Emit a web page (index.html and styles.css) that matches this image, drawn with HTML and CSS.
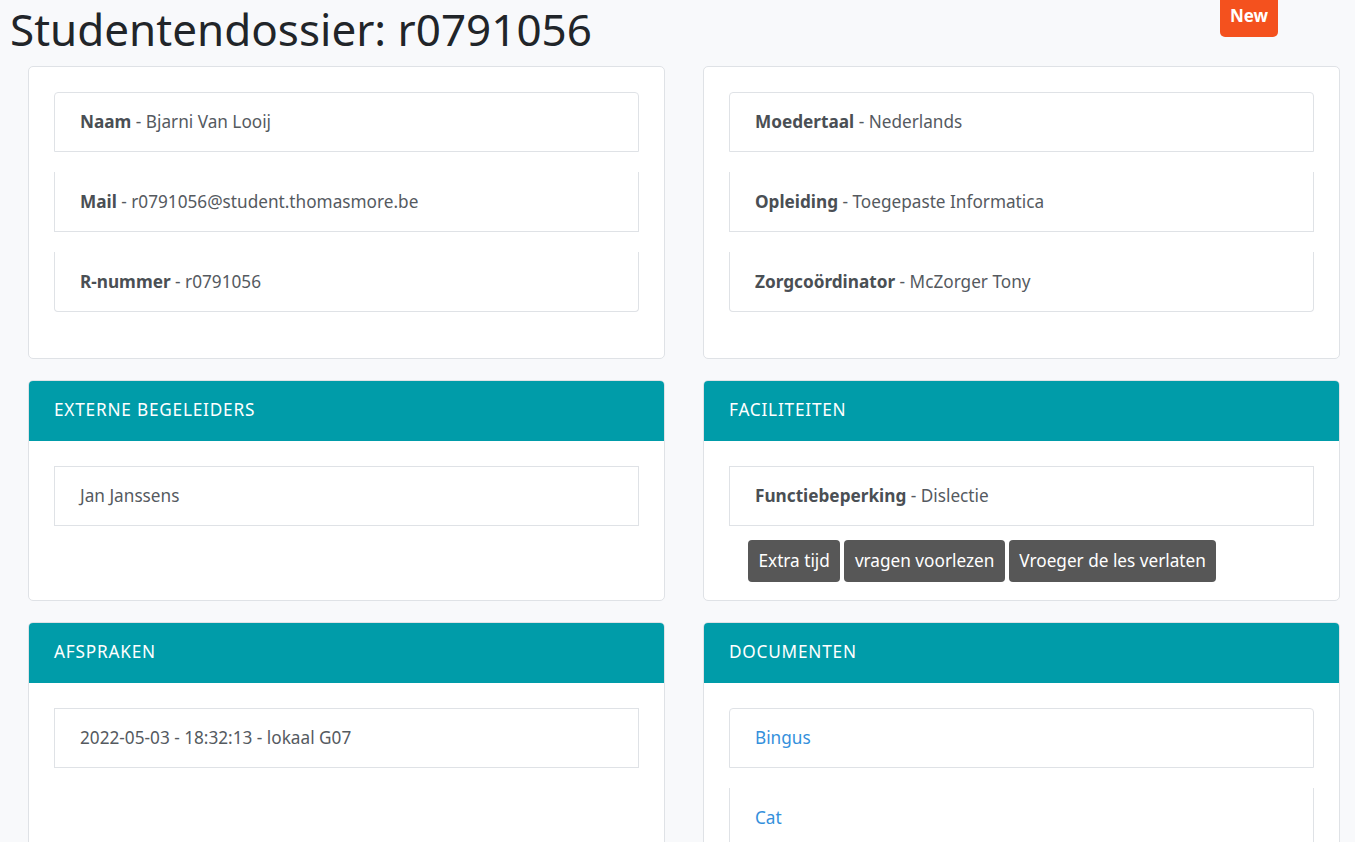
FILE: index.html
```html
<!DOCTYPE html>
<html lang="nl">
<head>
<meta charset="utf-8">
<title>Studentendossier</title>
<link rel="stylesheet" href="styles.css">
</head>
<body>
<span class="new-badge">New</span>
<h1 class="page-title">Studentendossier: r0791056</h1>
<main class="grid">
  <section class="card">
    <div class="card-body">
      <ul class="list">
        <li class="item"><b>Naam</b> - Bjarni Van Looij</li>
        <li class="item"><b>Mail</b> - r0791056@student.thomasmore.be</li>
        <li class="item"><b>R-nummer</b> - r0791056</li>
      </ul>
    </div>
  </section>
  <section class="card">
    <div class="card-body">
      <ul class="list">
        <li class="item"><b>Moedertaal</b> - Nederlands</li>
        <li class="item"><b>Opleiding</b> - Toegepaste Informatica</li>
        <li class="item"><b>Zorgcoördinator</b> - McZorger Tony</li>
      </ul>
    </div>
  </section>
  <section class="card">
    <div class="card-header">EXTERNE BEGELEIDERS</div>
    <div class="card-body">
      <ul class="list">
        <li class="item">Jan Janssens</li>
      </ul>
    </div>
  </section>
  <section class="card">
    <div class="card-header">FACILITEITEN</div>
    <div class="card-body">
      <ul class="list list-tight">
        <li class="item"><b>Functiebeperking</b> - Dislectie</li>
      </ul>
      <div class="tags">
        <span class="tag">Extra tijd</span>
        <span class="tag">vragen voorlezen</span>
        <span class="tag">Vroeger de les verlaten</span>
      </div>
    </div>
  </section>
  <section class="card">
    <div class="card-header">AFSPRAKEN</div>
    <div class="card-body">
      <ul class="list">
        <li class="item">2022-05-03 - 18:32:13 - lokaal G07</li>
      </ul>
    </div>
  </section>
  <section class="card">
    <div class="card-header">DOCUMENTEN</div>
    <div class="card-body">
      <ul class="list">
        <li class="item"><a href="#">Bingus</a></li>
        <li class="item"><a href="#">Cat</a></li>
      </ul>
    </div>
  </section>
</main>
</body>
</html>
```
FILE: styles.css
```css
* { box-sizing: border-box; }
html, body { margin: 0; }
body {
  background: #f8f9fb;
  font-family: "Noto Sans", "Lato", sans-serif;
  font-size: 17.2px;
  color: #555a5f;
}
.page-title {
  margin: 0;
  padding: 0 0 8px 10px;
  font-family: "Noto Sans", sans-serif;
  font-weight: 400;
  font-size: 44px;
  line-height: 58px;
  color: #212529;
}
.new-badge {
  position: absolute;
  top: 0;
  left: 1220px;
  width: 58px;
  height: 37px;
  padding-top: 4px;
  text-align: center;
  background: #f4511e;
  color: #fff;
  font-weight: 700;
  font-size: 17px;
  border-radius: 0 0 5px 5px;
}
.grid {
  display: grid;
  grid-template-columns: 637px 637px;
  column-gap: 38px;
  row-gap: 21px;
  padding: 0 15px 0 28px;
}
.card {
  background: #fff;
  border: 1px solid #dfe2e6;
  border-radius: 5px;
  overflow: hidden;
}
.card-header {
  background: #009ca9;
  color: #fff;
  height: 60px;
  padding: 0 25px;
  line-height: 58px;
  font-size: 17.2px;
  letter-spacing: 0.8px;
}
.card-body { padding: 25px 25px 18px; }
.list {
  list-style: none;
  margin: 0 0 28px;
  padding: 0;
  display: flex;
  flex-direction: column;
  gap: 20px;
}
.item {
  border: 1px solid #dfe2e6;
  border-top-width: 0;
  padding: 16px 25px 15px;
  line-height: 28px;
}
.item:first-child { border-top-width: 1px; padding-top: 15px; border-radius: 4px 4px 0 0; }
.item:last-child { border-radius: 0 0 4px 4px; }
.item:only-child { border-radius: 0; }
.item b { color: #4a4f54; font-weight: 700; }
.item a { color: #3490dc; text-decoration: none; }
.list-tight { margin-bottom: 14px; }
.tags { display: flex; gap: 4px; padding-left: 19px; }
.tag {
  background: #575757;
  color: #fff;
  border-radius: 4px;
  height: 42px;
  line-height: 42px;
  padding: 0 10.5px;
  font-size: 17.2px;
}
```
